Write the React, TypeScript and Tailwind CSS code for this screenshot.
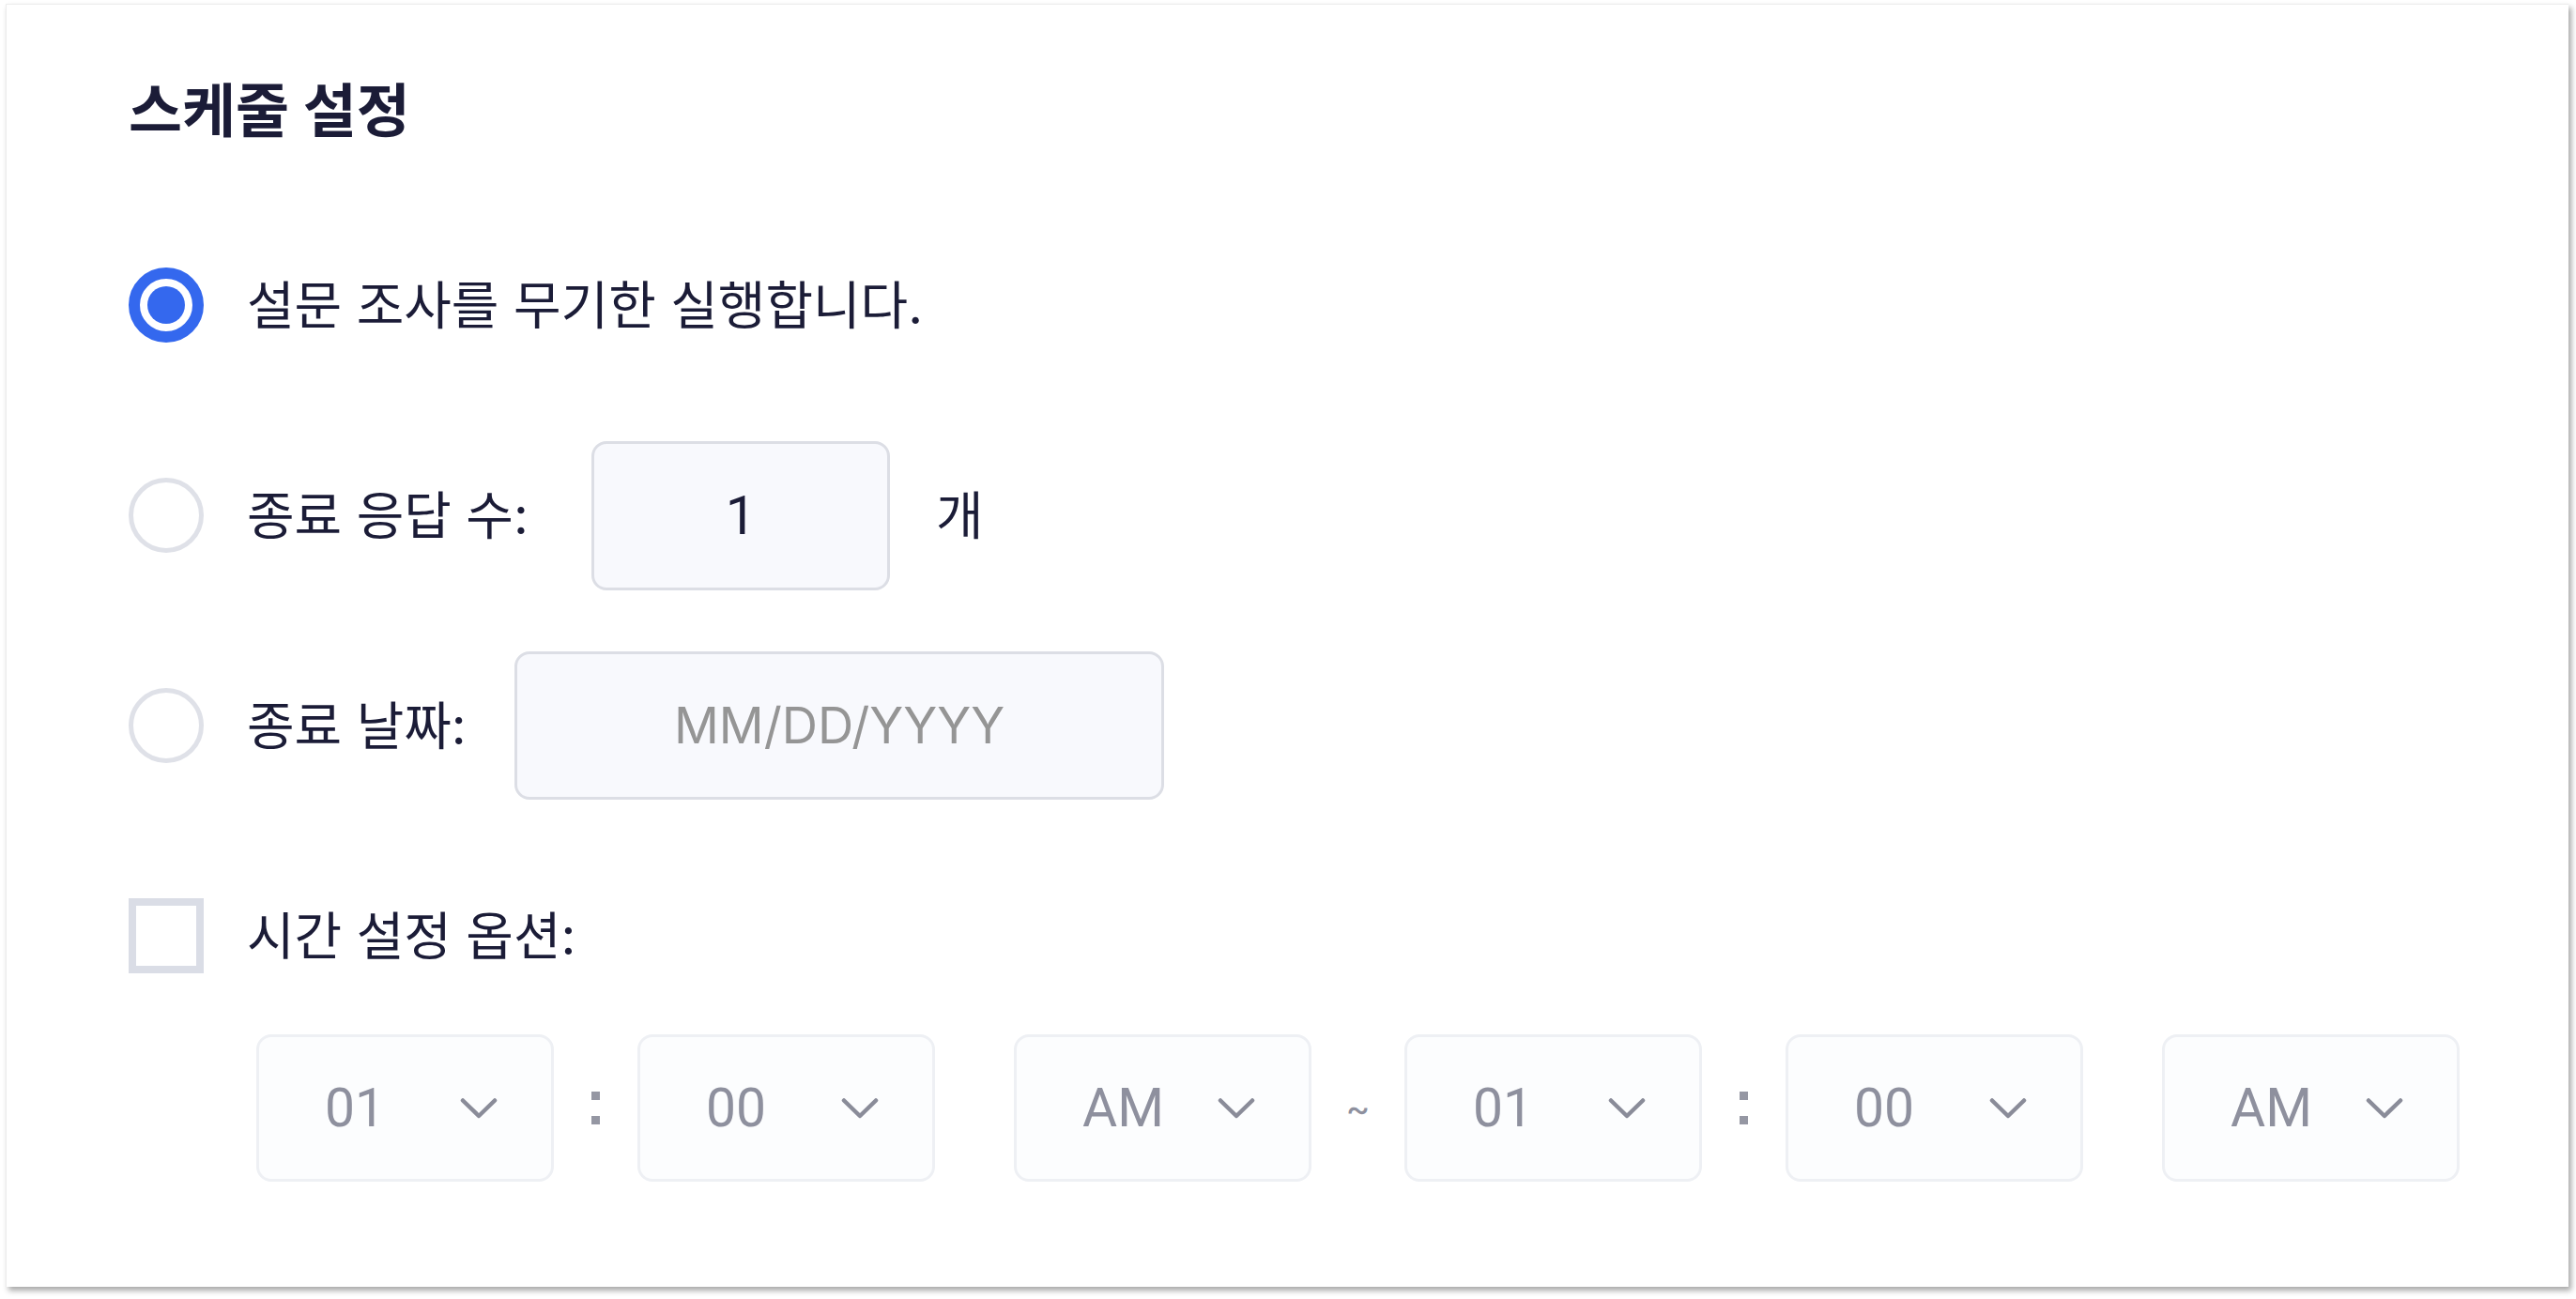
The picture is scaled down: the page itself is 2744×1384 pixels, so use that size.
import React from "react";

const Chevron = () => (
  <svg width="40" height="24" viewBox="0 0 40 24" fill="none" className="shrink-0">
    <path d="M3 3.5 L20 20 L37 3.5" stroke="#8a8c99" strokeWidth="4.5" strokeLinecap="round" strokeLinejoin="round" />
  </svg>
);

const TimeSelect = ({ value }: { value: string }) => (
  <div className="w-[317px] h-[157px] rounded-[16px] border-[3px] border-[#eef0f4] bg-[#fcfdfe] flex items-center justify-between pl-[70px] pr-[57px]">
    <span className="text-[57px] leading-none text-[#8e909e] font-['Roboto',sans-serif] font-normal">{value}</span>
    <Chevron />
  </div>
);

const Colon = () => (
  <div className="w-[89px] flex items-center justify-center">
    <div className="flex flex-col gap-[17px]">
      <div className="w-[9px] h-[9px] bg-[#9597a3]" />
      <div className="w-[9px] h-[9px] bg-[#9597a3]" />
    </div>
  </div>
);

const RadioOn = () => (
  <div className="w-[80px] h-[80px] rounded-full border-[12px] border-[#3468ee] flex items-center justify-center shrink-0">
    <div className="w-[40px] h-[40px] rounded-full bg-[#3468ee]" />
  </div>
);

const RadioOff = () => (
  <div className="w-[80px] h-[80px] rounded-full border-[5px] border-[#dfe1e8] bg-white shrink-0" />
);

export default function App() {
  return (
    <div className="w-[2744px] h-[1384px] bg-white pt-[4px] pl-[6px] font-['Inter','Noto_Sans_CJK_KR',sans-serif] text-[#1b1c37]">
      <div className="w-[2730px] h-[1367px] bg-white border-t border-l border-[#ececec] shadow-[3px_4px_6px_rgba(0,0,0,0.35)] pl-[130px] pt-[82px] flex flex-col">
        <div className="h-[64px] flex items-center">
          <h1 className="text-[62px] font-bold leading-none">스케줄 설정</h1>
        </div>

        <div className="mt-[94px] h-[160px] flex items-center">
          <RadioOn />
          <span className="ml-[46px] text-[55px] leading-none">설문 조사를 무기한 실행합니다.</span>
        </div>

        <div className="mt-[64px] h-[160px] flex items-center">
          <RadioOff />
          <span className="ml-[46px] w-[367px] text-[55px] leading-none">종료 응답 수:</span>
          <div className="w-[318px] h-[159px] rounded-[16px] border-[3px] border-[#dcdee5] bg-[#f8f9fd] flex items-center justify-center">
            <span className="text-[58px] leading-none font-normal text-[#1b1c37] font-['Roboto',sans-serif]">1</span>
          </div>
          <span className="ml-[49px] text-[55px] leading-none">개</span>
        </div>

        <div className="mt-[64px] h-[160px] flex items-center">
          <RadioOff />
          <span className="ml-[46px] w-[285px] text-[55px] leading-none">종료 날짜:</span>
          <div className="w-[692px] h-[158px] rounded-[16px] border-[3px] border-[#dcdee5] bg-[#f8f9fd] flex items-center justify-center">
            <span className="text-[53px] leading-none text-[#959595] font-['Inter',sans-serif]">MM/DD/YYYY</span>
          </div>
        </div>

        <div className="mt-[64px] h-[160px] flex items-center">
          <div className="w-[80px] h-[80px] border-[8px] border-[#dadde6] bg-white shrink-0" />
          <span className="ml-[46px] text-[55px] leading-none">시간 설정 옵션:</span>
        </div>

        <div className="mt-[25px] ml-[136px] flex items-stretch">
          <TimeSelect value="01" />
          <Colon />
          <TimeSelect value="00" />
          <div className="w-[84px]" />
          <TimeSelect value="AM" />
          <div className="w-[99px] flex items-center justify-center">
            <span className="text-[40px] leading-none text-[#8e909e]">~</span>
          </div>
          <TimeSelect value="01" />
          <Colon />
          <TimeSelect value="00" />
          <div className="w-[84px]" />
          <TimeSelect value="AM" />
        </div>
      </div>
    </div>
  );
}
